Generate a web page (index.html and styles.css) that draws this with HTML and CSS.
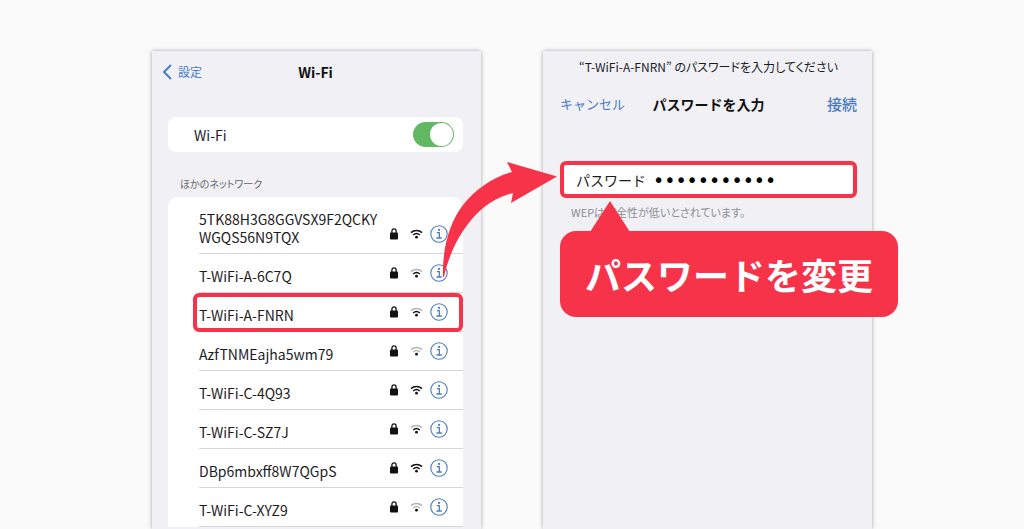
FILE: index.html
```
<!DOCTYPE html>
<html lang="ja">
<head>
  <meta charset="UTF-8" />
  <meta name="viewport" content="width=device-width, initial-scale=1.0"/>
  <title>Wi-Fi パスワードの変更</title>
  <link rel="stylesheet" href="styles.css">
</head>
<body>
<svg class="sprite" aria-hidden="true">
  <symbol id="lock" viewBox="0 0 8 12">
    <rect x="0" y="4.6" width="8" height="7" rx="1"/>
    <path d="M1.9 5V3a2.1 2.1 0 0 1 4.2 0v2" fill="none" stroke="currentColor" stroke-width="1.3"/>
  </symbol>
  <symbol id="wifi" viewBox="0 0 13 10">
    <path class="outer" d="M1 3.6a8.2 8.2 0 0 1 11 0" fill="none" stroke-width="1.5"/>
    <path class="inner" d="M3.2 6a5 5 0 0 1 6.6 0" fill="none" stroke-width="1.5"/>
    <circle cx="6.5" cy="8.2" r="1.4"/>
  </symbol>
  <symbol id="info" viewBox="0 0 18 18">
    <circle cx="9" cy="9" r="8.2" fill="none" stroke="currentColor" stroke-width="1.1"/>
    <circle cx="9" cy="4.9" r="1.1"/>
    <path d="M6.8 7.7h2.5v5.2M6.4 13h5.4" fill="none" stroke="currentColor" stroke-width="1.3"/>
  </symbol>
</svg>

<main class="stage">
  <section class="phone">
    <header class="bar">
      <a class="back" href="#"><svg viewBox="0 0 10 16"><path d="M9 1L2 8l7 7"/></svg>設定</a>
      <h1>Wi-Fi</h1>
    </header>
    <label class="card">
      <span>Wi-Fi</span>
      <input class="toggle" type="checkbox" checked>
    </label>
    <h2>ほかのネットワーク</h2>
    <ul class="networks">
      <li><span class="name">5TK88H3G8GGVSX9F2QCKY<br>WGQS56N9TQX</span><svg class="lock"><use href="#lock"/></svg><svg class="wifi"><use href="#wifi"/></svg><button class="info" aria-label="詳細"><svg><use href="#info"/></svg></button></li>
      <li><span class="name">T-WiFi-A-6C7Q</span><svg class="lock"><use href="#lock"/></svg><svg class="wifi mid"><use href="#wifi"/></svg><button class="info" aria-label="詳細"><svg><use href="#info"/></svg></button></li>
      <li class="picked"><span class="name">T-WiFi-A-FNRN</span><svg class="lock"><use href="#lock"/></svg><svg class="wifi mid"><use href="#wifi"/></svg><button class="info" aria-label="詳細"><svg><use href="#info"/></svg></button></li>
      <li><span class="name">AzfTNMEajha5wm79</span><svg class="lock"><use href="#lock"/></svg><svg class="wifi low"><use href="#wifi"/></svg><button class="info" aria-label="詳細"><svg><use href="#info"/></svg></button></li>
      <li><span class="name">T-WiFi-C-4Q93</span><svg class="lock"><use href="#lock"/></svg><svg class="wifi"><use href="#wifi"/></svg><button class="info" aria-label="詳細"><svg><use href="#info"/></svg></button></li>
      <li><span class="name">T-WiFi-C-SZ7J</span><svg class="lock"><use href="#lock"/></svg><svg class="wifi mid"><use href="#wifi"/></svg><button class="info" aria-label="詳細"><svg><use href="#info"/></svg></button></li>
      <li><span class="name">DBp6mbxff8W7QGpS</span><svg class="lock"><use href="#lock"/></svg><svg class="wifi"><use href="#wifi"/></svg><button class="info" aria-label="詳細"><svg><use href="#info"/></svg></button></li>
      <li><span class="name">T-WiFi-C-XYZ9</span><svg class="lock"><use href="#lock"/></svg><svg class="wifi low"><use href="#wifi"/></svg><button class="info" aria-label="詳細"><svg><use href="#info"/></svg></button></li>
    </ul>
  </section>

  <section class="phone entry">
    <p class="prompt">“T-WiFi-A-FNRN” のパスワードを入力してください</p>
    <header class="actions">
      <button class="cancel">キャンセル</button>
      <h1>パスワードを入力</h1>
      <button class="join">接続</button>
    </header>
    <div class="field">
      <label for="password">パスワード</label>
      <input id="password" type="password" value="abcdefghijk">
    </div>
    <div class="note">
      <p>WEPは安全性が低いとされています。</p>
      <div class="callout">パスワードを変更</div>
    </div>
  </section>

  <svg class="arrow" viewBox="0 0 116 118" aria-hidden="true">
    <path d="M115 16.500L65 2l5 10C51 17 34 29 21 45C7 63 0 90 1 117L2 117C5 103 11 86 21 71C33 53 48 39 71 33l-2 10z"/>
  </svg>
</main>
</body>
</html>
```

FILE: styles.css
```
* { box-sizing: border-box; }
body { margin: 0; height: 100vh; overflow: hidden; background: #fafafa; color: #1c1c1e; font-family: "Noto Sans CJK JP", sans-serif; }
h1, h2, p, ul { margin: 0; padding: 0; }
button { padding: 0; border: none; background: none; font-family: inherit; color: #4a7cc4; cursor: pointer; }
svg { display: block; fill: currentColor; }
.sprite { position: absolute; width: 0; height: 0; }

.stage { position: relative; display: grid; grid-template-columns: 1fr 1fr; gap: 62px; max-width: 720px; height: 100vh; margin: 0 auto; padding-top: 51px; }
.phone { padding: 0 18px 0 16px; background: #f0f0f5; box-shadow: 0 0 4px rgba(0,0,0,0.35); }
.phone.entry { padding: 0 15px 0 17px; }

.bar { display: grid; grid-template-columns: 1fr auto 1fr; align-items: center; height: 41px; }
.bar h1 { font-size: 14px; line-height: 20px; color: #111; }
.back { display: flex; align-items: center; gap: 6px; margin-left: -6px; font-size: 12px; color: #4a7cc4; text-decoration: none; }
.back svg { width: 10px; height: 16px; fill: none; stroke: #4a7cc4; stroke-width: 2; }

.card { display: flex; justify-content: space-between; align-items: center; height: 35px; margin-top: 25px; padding: 0 9px 0 26px; border-radius: 8px; background: #fff; font-size: 14px; line-height: 20px; }
.toggle { appearance: none; width: 41px; height: 25px; margin: 0; padding: 1px; border-radius: 13px; background: #62b862; }
.toggle::before { content: ""; display: block; width: 23px; height: 23px; border-radius: 50%; background: #fff; }
.toggle:checked::before { margin-left: auto; }

h2 { margin: 24px 0 5px; padding-left: 12px; font-size: 10px; line-height: 16px; font-weight: 400; font-feature-settings: "palt"; color: #66666b; }

.networks { list-style: none; padding-left: 31px; border-radius: 10px 10px 0 0; background: #fff; }
.networks li { position: relative; display: flex; align-items: flex-end; height: 39px; padding: 0 15px 6px 0; border-bottom: 1px solid #d6d6da; color: #111; }
.networks li:first-child { height: 57px; }
.name { flex: 1; margin-bottom: 1px; font-size: 14px; line-height: 18px; color: #1c1c1e; }
.lock { width: 8px; height: 12px; margin: 0 12px 7px 0; }
.wifi { width: 13px; height: 10px; margin: 0 7px 8px 0; --outer: #111; --inner: #111; }
.wifi.mid { --outer: #b5b5b5; }
.wifi.low { --outer: #b5b5b5; --inner: #b5b5b5; }
.outer { stroke: var(--outer); }
.inner { stroke: var(--inner); }
.info { margin-bottom: 4px; }
.info svg { width: 18px; height: 18px; }
.picked::after { content: ""; position: absolute; inset: 0 0 -1px -6px; border: 4px solid #f73349; border-radius: 6px; }

.prompt { padding-top: 6px; font-size: 12px; line-height: 20px; text-align: center; font-feature-settings: "palt"; }
.actions { display: grid; grid-template-columns: 1fr auto 1fr; align-items: center; height: 20px; margin-top: 17px; }
.actions h1 { font-size: 14px; line-height: 20px; color: #111; }
.cancel { justify-self: start; font-size: 13px; line-height: 20px; }
.join { justify-self: end; font-size: 15px; line-height: 20px; font-weight: 500; }

.field { display: flex; align-items: center; gap: 7px; height: 37px; margin-top: 47px; padding: 0 12px; border: 4px solid #f73349; border-radius: 6px; background: #fff; }
.field label { font-size: 14px; line-height: 20px; }
.field input { flex: 1; min-width: 0; height: 25px; padding: 0; border: none; outline: none; background: none; color: #000; font-family: "DejaVu Sans", sans-serif; font-size: 19px; }

.note { position: relative; padding: 4px 11px; font-size: 11px; line-height: 20px; font-feature-settings: "palt"; color: #8e8e93; }
.callout { position: absolute; top: 33px; left: 0; padding: 15px 25px; border-radius: 16px; background: #f73349; color: #fff; font-size: 36px; line-height: 56px; font-weight: 700; font-feature-settings: normal; white-space: nowrap; }
.callout::before { content: ""; position: absolute; left: 30px; bottom: 100%; width: 40px; height: 31px; margin-bottom: -1px; background: #f73349; clip-path: polygon(50% 0, 100% 100%, 0 100%); }

.arrow { position: absolute; top: 160px; left: 290px; width: 116px; height: 118px; fill: #f73349; }
```
